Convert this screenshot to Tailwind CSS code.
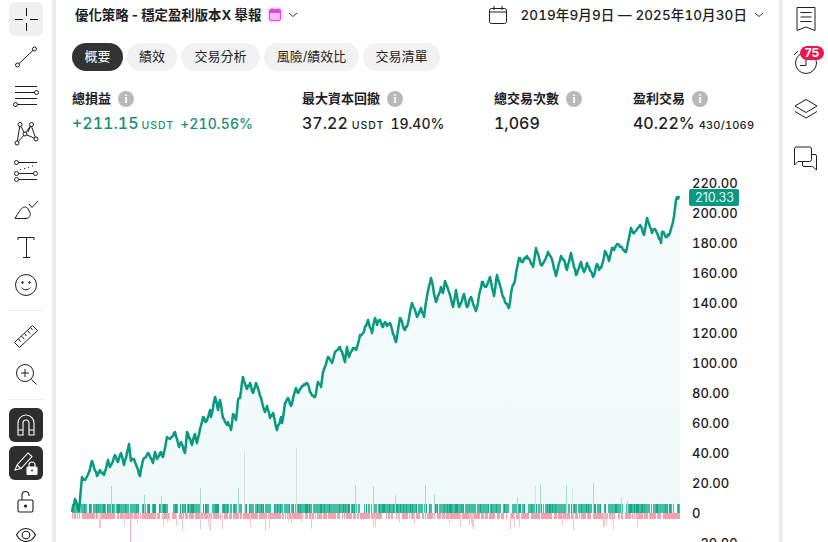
<!DOCTYPE html>
<html lang="zh-Hant">
<head>
    <meta charset="UTF-8">
    <title>策略績效</title>
    <script src="https://cdn.jsdelivr.net/npm/@tailwindcss/browser@4"></script>
</head>
<body class="bg-white text-[#1e1e1e] font-['Inter','Noto_Sans_CJK_TC',sans-serif] antialiased">
<div class="flex w-[828px] h-[542px] overflow-hidden">

    <!-- Left toolbar -->
    <aside class="w-[56px] shrink-0 h-full border-r-4 border-[#ececec] flex flex-col items-center text-[#1e1e1e] overflow-hidden [&>*]:shrink-0">
        <div class="h-[38px] flex items-center">
            <div class="w-[34px] h-[34px] rounded-md bg-[#f0f0f0] flex items-center justify-center">
                <svg width="26" height="26" viewBox="0 0 26 26" fill="none" stroke="#111" stroke-width="1"><path d="M2 13.500h8M17 13.500h8M13.500 2v8M13.500 17v8"/></svg>
            </div>
        </div>
        <div class="h-[38px] flex items-center">
            <svg width="26" height="26" viewBox="0 0 26 26" fill="none" stroke="currentColor" stroke-width="1"><circle cx="4.500" cy="21" r="2"/><circle cx="21.500" cy="5" r="2"/><path d="M6 19.600L20 6.400"/></svg>
        </div>
        <div class="h-[38px] flex items-center">
            <svg width="28" height="26" viewBox="0 0 28 26" fill="none" stroke="currentColor" stroke-width="1"><path d="M3 4.500h22M3 10.500h20M3 16.500h22M5 22.500h20"/><circle cx="24.500" cy="10.500" r="2" fill="#fff"/><circle cx="3.500" cy="22.500" r="2" fill="#fff"/></svg>
        </div>
        <div class="h-[38px] flex items-center">
            <svg width="26" height="26" viewBox="0 0 26 26" fill="none" stroke="currentColor" stroke-width="1"><path d="M7 5L12 14L4 23M7 5L4 23M12 14L18 5L23 19L12 14M18 5L15 12"/><circle cx="7" cy="4.500" r="2" fill="#fff"/><circle cx="18.500" cy="4.500" r="2" fill="#fff"/><circle cx="12" cy="14" r="2" fill="#fff"/><circle cx="4" cy="23" r="2" fill="#fff"/><circle cx="23" cy="19" r="2" fill="#fff"/></svg>
        </div>
        <div class="h-[38px] flex items-center">
            <svg width="26" height="26" viewBox="0 0 26 26" fill="none" stroke="currentColor" stroke-width="1"><path d="M5 4.500h19M5 15.500h17M5 21.500h19"/><circle cx="3.500" cy="4.500" r="2" fill="#fff"/><circle cx="3.500" cy="15.500" r="2" fill="#fff"/><circle cx="3.500" cy="21.500" r="2" fill="#fff"/><circle cx="22.500" cy="15.500" r="2" fill="#fff"/><path d="M7 11.500h1M11 10.500h1M15 9.500h1M19 8h1"/></svg>
        </div>
        <div class="h-[38px] flex items-center">
            <svg width="26" height="26" viewBox="0 0 26 26" fill="none" stroke="currentColor" stroke-width="1"><path d="M2 22.500h11c3 0 5-3 4-6l-2.500-4.500c-3-2-5.500-.5-7.500 2.500C5 17 3.500 20 2 22.500z"/><path d="M16 8l3 3.500L25 5"/></svg>
        </div>
        <div class="h-[38px] flex items-center">
            <svg width="26" height="26" viewBox="0 0 26 26" fill="none" stroke="currentColor" stroke-width="1"><path d="M5 6V3.500h16V6M13.500 3.500v20M10 23.500h7"/></svg>
        </div>
        <div class="h-[38px] flex items-center">
            <svg width="26" height="26" viewBox="0 0 26 26" fill="none" stroke="currentColor" stroke-width="1"><circle cx="13" cy="13" r="10.500"/><circle cx="9.500" cy="10.500" r=".8" fill="currentColor"/><circle cx="16.500" cy="10.500" r=".8" fill="currentColor"/><path d="M8.500 15.500c2.500 3 6.500 3 9 0"/></svg>
        </div>
        <div class="w-[36px] h-px bg-[#ececec] mt-[6px]"></div>
        <div class="h-[38px] flex items-center mt-[6px]">
            <svg width="28" height="28" viewBox="0 0 28 28" fill="none" stroke="currentColor" stroke-width="1"><path d="M2.500 20.500L20.500 3.500l5 5L7.500 25.500z"/><path d="M6.500 17l2 2.500M9.500 14l2.800 3.200M12.500 11.500l2 2.500M15.500 8.500l2.800 3.200M18.500 5.500l2 2.500"/></svg>
        </div>
        <div class="h-[38px] flex items-center">
            <svg width="26" height="26" viewBox="0 0 26 26" fill="none" stroke="currentColor" stroke-width="1"><circle cx="12" cy="12" r="8.500"/><path d="M12 8v8M8 12h8M18.500 18.500l5 5"/></svg>
        </div>
        <div class="w-[36px] h-px bg-[#ececec] mt-[6px]"></div>
        <div class="w-[34px] h-[34px] mt-[8px] rounded-md bg-[#2e2e2e] flex items-center justify-center">
            <svg width="24" height="26" viewBox="0 0 24 26" fill="none" stroke="#fff" stroke-width="1.100"><path d="M4 23V11a8 8 0 0 1 16 0v12h-5V11a3 3 0 0 0-6 0v12zM4 18h5M15 18h5"/></svg>
        </div>
        <div class="w-[34px] h-[34px] mt-[4px] rounded-md bg-[#2e2e2e] flex items-center justify-center">
            <svg width="26" height="26" viewBox="0 0 26 26" fill="none" stroke="#fff" stroke-width="1.100"><path d="M2 20l2-5L15 3l4 3.500L8 18.500z"/><path d="M4 15l4 3.500"/><rect x="14" y="17" width="10" height="7.500" rx="1" fill="#fff"/><path d="M16 17v-2a3 3 0 0 1 6 0v2"/><circle cx="19" cy="20.500" r="1" fill="#2e2e2e" stroke="none"/></svg>
        </div>
        <div class="h-[28px] flex items-center mt-[8px]">
            <svg width="24" height="26" viewBox="0 0 24 26" fill="none" stroke="currentColor" stroke-width="1.100"><rect x="4" y="11" width="15" height="12" rx="1.500"/><path d="M8 11V6a3.500 3.500 0 0 1 7 0v1"/><circle cx="11.500" cy="17" r="1" fill="currentColor"/></svg>
        </div>
        <div class="h-[28px] flex items-center mt-[5px]">
            <svg width="22" height="18" viewBox="0 0 22 18" fill="none" stroke="currentColor" stroke-width="1.100"><path d="M1.500 9C4 4.500 7 2.500 11 2.500S18 4.500 20.500 9C18 13.500 15 15.500 11 15.500S4 13.500 1.500 9z"/><circle cx="11" cy="9" r="3.800"/></svg>
        </div>
    </aside>

    <!-- Main -->
    <main class="w-[723px] shrink-0 h-full flex flex-col overflow-hidden">
        <header class="h-[30px] flex items-center justify-between pl-[19px] pr-[15px] shrink-0">
            <div class="flex items-center">
                <h1 class="text-[13.400px] font-bold whitespace-nowrap">優化策略 - 穩定盈利版本X 舉報</h1>
                <svg class="ml-[8px] drop-shadow-[0_0_2px_#f0a0f0]" width="12" height="13" viewBox="0 0 12 13"><rect x=".5" y="1.500" width="11" height="11" rx="1.500" fill="#f8b8f5" stroke="#d64be0"/><rect x=".5" y="1.500" width="11" height="3.500" fill="#d64be0"/><path d="M3 0v2M9 0v2" stroke="#d64be0"/></svg>
                <svg class="ml-[7px]" width="10" height="6" viewBox="0 0 10 6" fill="none" stroke="#333" stroke-width="1"><path d="M1 1l4 3.500L9 1"/></svg>
            </div>
            <div class="flex items-center">
                <svg width="18" height="18" viewBox="0 0 18 18" fill="none" stroke="#1e1e1e" stroke-width="1"><rect x=".5" y="2.500" width="17" height="15" rx="2"/><path d="M.5 6h17M5 0v4M13 0v4"/></svg>
                <span class="ml-[13px] text-[13.500px] tracking-[0.1px] font-medium tabular-nums whitespace-nowrap">2019年9月9日 — 2025年10月30日</span>
                <svg class="ml-[7px]" width="10" height="6" viewBox="0 0 10 6" fill="none" stroke="#333" stroke-width="1"><path d="M1 1l4 3.500L9 1"/></svg>
            </div>
        </header>

        <nav class="flex gap-[4px] pl-[16px] mt-[13px] text-[13px] shrink-0">
            <span class="h-[28px] w-[51px] flex items-center justify-center rounded-full bg-[#333] text-white">概要</span>
            <span class="h-[28px] w-[50px] flex items-center justify-center rounded-full bg-[#f2f2f2]">績效</span>
            <span class="h-[28px] w-[79px] flex items-center justify-center rounded-full bg-[#f2f2f2]">交易分析</span>
            <span class="h-[28px] w-[95px] flex items-center justify-center rounded-full bg-[#f2f2f2]">風險/績效比</span>
            <span class="h-[28px] w-[77px] flex items-center justify-center rounded-full bg-[#f2f2f2]">交易清單</span>
        </nav>

        <section class="grid grid-cols-[230px_192px_139px_auto] pl-[16px] mt-[19px] h-[52px] shrink-0 tabular-nums">
            <div>
                <div class="flex items-center h-[18px] text-[13px] font-bold">總損益<span class="ml-[7px] w-[16px] h-[16px] rounded-full bg-[#b8b8b8] text-white text-[11px] font-bold flex items-center justify-center">i</span></div>
                <div class="mt-[3px] flex items-baseline text-[#16906f] font-medium whitespace-nowrap"><span class="text-[16px]">+211.15</span><span class="ml-[3px] text-[10.500px] tracking-[1px]">USDT</span><span class="ml-[6px] text-[14px] tracking-[0.1px]">+210.56%</span></div>
            </div>
            <div>
                <div class="flex items-center h-[18px] text-[13px] font-bold">最大資本回撤<span class="ml-[7px] w-[16px] h-[16px] rounded-full bg-[#b8b8b8] text-white text-[11px] font-bold flex items-center justify-center">i</span></div>
                <div class="mt-[3px] flex items-baseline font-medium whitespace-nowrap"><span class="text-[16px]">37.22</span><span class="ml-[4px] text-[10.500px] tracking-[1px]">USDT</span><span class="ml-[6px] text-[14px]">19.40%</span></div>
            </div>
            <div>
                <div class="flex items-center h-[18px] text-[13px] font-bold">總交易次數<span class="ml-[7px] w-[16px] h-[16px] rounded-full bg-[#b8b8b8] text-white text-[11px] font-bold flex items-center justify-center">i</span></div>
                <div class="mt-[3px] flex items-baseline font-medium"><span class="text-[16px]">1,069</span></div>
            </div>
            <div>
                <div class="flex items-center h-[18px] text-[13px] font-bold">盈利交易<span class="ml-[7px] w-[16px] h-[16px] rounded-full bg-[#b8b8b8] text-white text-[11px] font-bold flex items-center justify-center">i</span></div>
                <div class="mt-[3px] flex items-baseline font-medium whitespace-nowrap"><span class="text-[16px]">40.22%</span><span class="ml-[4px] text-[11px] tracking-[0.2px]">430/1069</span></div>
            </div>
        </section>

        <!-- Chart: page pixels inside, the viewBox starts at the main column's left edge and the chart's top -->
        <div class="relative flex-1">
            <svg id="chart" class="absolute left-0 top-0" width="723" height="400" viewBox="56 142 723 400"></svg>
            <div id="axis" class="absolute left-0 top-0 w-[723px] h-[400px] text-[13px] leading-[14px] font-medium tabular-nums"></div>
            <div class="absolute left-[633px] top-[47px] w-[50px] h-[17px] bg-[#089981] rounded-[2px] text-white/90 text-[12.500px] leading-[17px] text-right pr-[5px]">210.33</div>
        </div>
    </main>

    <!-- Right toolbar -->
    <aside class="flex-1 h-full border-l-4 border-[#ececec] flex flex-col items-center text-[#1e1e1e] [&>*]:shrink-0">
        <div class="h-[38px] flex items-center">
            <svg width="22" height="26" viewBox="0 0 22 26" fill="none" stroke="currentColor" stroke-width="1"><path d="M2 1.500h18v23l-9-3.500-9 3.500zM5.500 6.500h11M5.500 11h11M5.500 15.500h11"/></svg>
        </div>
        <div class="relative h-[35px] mt-[3px] w-full flex items-end justify-center">
            <svg width="26" height="28" viewBox="0 0 26 28" fill="none" stroke="currentColor" stroke-width="1"><circle cx="13" cy="15" r="10.500"/><path d="M13 9v8.500H7M1 7l4-4"/></svg>
            <span class="absolute left-[17px] top-[5px] w-[24px] h-[14px] rounded-full bg-[#e8194a] text-white text-[12px] font-bold leading-[14px] text-center">75</span>
        </div>
        <div class="h-[24px] mt-[21px] flex items-center">
            <svg width="24" height="22" viewBox="0 0 24 22" fill="none" stroke="currentColor" stroke-width="1"><path d="M12 1.500L23 8l-11 6.500L1 8zM1 13.500L12 20l11-6.500"/></svg>
        </div>
        <div class="h-[26px] mt-[24px] flex items-center">
            <svg width="25" height="25" viewBox="0 0 25 25" fill="none" stroke="currentColor" stroke-width="1"><path d="M1.500 3a2 2 0 0 1 2-2h13a2 2 0 0 1 2 2v10.500a2 2 0 0 1-2 2H5l-3.500 3.500z"/><path d="M18.500 8.500h3.500a1.500 1.500 0 0 1 1.500 1.500v14l-4-3.500h-8.500a1.500 1.500 0 0 1-1.500-1.500v-3.500"/></svg>
        </div>
    </aside>
</div>

<script>
    // Equity curve, traced from the chart in page pixels
    const curve = [[72,512],[75,499],[79,511],[82,477],[85,480],[89,472],[92,461],[97,476],[100,470],[104,475],[108,460],[110,467],[115,455],[118,462],[121,453],[124,465],[129,444],[131,461],[134,459],[140,476],[143,460],[148,453],[153,463],[155,452],[157,459],[161,452],[163,457],[167,437],[170,439],[175,432],[179,447],[181,442],[185,453],[187,432],[192,445],[195,434],[197,443],[203,417],[206,422],[210,410],[211,417],[215,397],[218,410],[220,400],[223,418],[227,425],[228,422],[231,430],[233,414],[236,420],[238,400],[240,398],[243,377],[247,389],[250,383],[253,393],[256,383],[262,402],[265,412],[267,406],[270,418],[273,413],[277,430],[281,417],[282,423],[285,403],[288,398],[291,406],[296,388],[298,393],[302,386],[307,383],[311,393],[315,397],[318,382],[321,387],[323,372],[328,357],[332,363],[335,352],[340,347],[345,362],[347,347],[349,357],[353,348],[356,350],[360,335],[363,333],[368,320],[372,333],[375,318],[377,325],[380,320],[383,327],[385,322],[387,326],[390,323],[396,342],[400,318],[405,330],[408,323],[412,303],[417,317],[421,308],[424,317],[426,302],[431,278],[436,302],[441,287],[443,293],[445,281],[450,295],[453,307],[456,290],[459,307],[464,294],[467,307],[471,297],[476,311],[482,282],[486,287],[490,277],[494,296],[497,275],[503,297],[509,308],[512,288],[515,280],[519,258],[522,262],[527,256],[533,267],[536,248],[541,265],[544,262],[548,252],[551,257],[556,276],[561,256],[564,260],[567,270],[571,253],[576,275],[581,262],[584,272],[587,263],[593,277],[597,264],[599,270],[602,265],[605,251],[609,261],[612,248],[614,250],[617,244],[620,247],[626,252],[631,228],[633,233],[640,225],[644,235],[647,218],[652,233],[655,229],[661,243],[662,232],[667,237],[670,233],[673,222],[676,200],[679,196]];

    // small repeatable random source so the chart looks the same each render
    let seed = 7;
    const rnd = () => (seed = (seed * 16807) % 2147483647) / 2147483647;

    // fine noise between the traced points
    const noisy = [];
    curve.forEach((p, i) => {
        noisy.push(p);
        const next = curve[i + 1];
        if (!next) return;
        const steps = Math.floor(next[0] - p[0]);
        for (let s = 1; s < steps; s++) {
            const t = s / steps;
            noisy.push([(p[0] + (next[0] - p[0]) * t).toFixed(1), (p[1] + (next[1] - p[1]) * t + (rnd() - 0.5) * 3).toFixed(1)]);
        }
    });

    let bars = '';
    let on = true;
    for (let x = 72; x < 680; x += 1) {
        if (rnd() < (on ? 0.14 : 0.65)) on = !on;
        if (on) {
            const spike = rnd() < 0.03;
            const h = spike ? 10 + rnd() * 20 : 9;
            bars += `<rect x="${x}" y="${513 - h}" width="1" height="${h}" fill="${spike ? '#9fded0' : (rnd() < 0.35 ? '#17a98a' : '#43c0a4')}"/>`;
        }
        if (rnd() < 0.8) {
            const spike = rnd() < 0.05;
            const h = spike ? 8 + rnd() * 10 : 6;
            bars += `<rect x="${x}" y="513" width="1" height="${h}" fill="${spike ? '#f8c4cc' : '#f7a0ae'}"/>`;
        }
    }
    // tall volume spikes picked out by eye
    [[130,513,29,'#f4aebb'],[244,451,62,'#d9dfdf'],[296,448,65,'#d5dfdd'],[238,488,25,'#9fded0'],[535,486,27,'#cfe6e1'],[572,488,25,'#cfe6e1'],[519,513,14,'#f4c5cd'],[200,513,16,'#f4c5cd'],[222,513,16,'#f4c5cd']].forEach(([x, y, h, c]) => {
        bars += `<rect x="${x}" y="${y}" width="1" height="${h}" fill="${c}"/>`;
    });

    const line = noisy.map(p => p.join(',')).join(' ');
    document.getElementById('chart').innerHTML = `
        <defs><linearGradient id="area" x1="0" y1="0" x2="0" y2="1"><stop offset="0" stop-color="#f6fcfb"/><stop offset="1" stop-color="#eef9f8"/></linearGradient></defs>
        <polygon points="72,513 ${line} 680,196 680,513" fill="url(#area)"/>
        ${bars}
        <polyline points="${line}" fill="none" stroke="#089981" stroke-width="2.500" stroke-linejoin="round"/>
    `;

    // price axis labels
    const labels = ['220.00','200.00','180.00','160.00','140.00','120.00','100.00','80.00','60.00','40.00','20.00','0','−20.00'];
    document.getElementById('axis').innerHTML = labels.map((t, i) =>
        `<span style="position:absolute;left:636px;top:${34 + i * 30}px">${t}</span>`
    ).join('');
</script>
</body>
</html>
